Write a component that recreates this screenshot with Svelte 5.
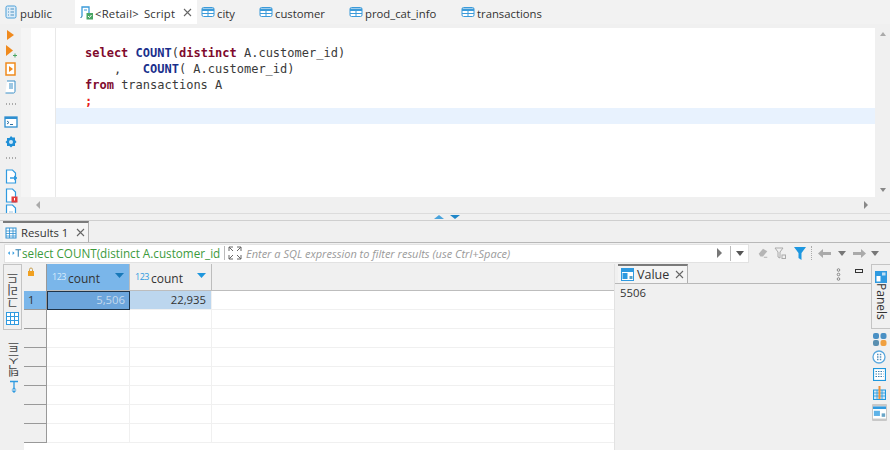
<script>
  const tabs = [
    { name: "city", width: 58 },
    { name: "customer", width: 90 },
    { name: "prod_cat_info", width: 112 },
    { name: "transactions", width: 100 },
  ];
  const rows = [1, 2, 3, 4, 5, 6, 7, 8];
</script>

{#snippet tableIcon()}
  <svg class="ic" width="14" height="12" viewBox="0 0 14 12">
    <rect x="1" y="1.5" width="12" height="9" rx="1.5" fill="#fff" stroke="#3b9ad9" />
    <path d="M1 2.500h12v2.500H1z" fill="#3b9ad9" />
    <path d="M7 5v5M1 7.500h12" stroke="#3b9ad9" />
  </svg>
{/snippet}

{#snippet doc(badge)}
  <svg width="14" height="15" viewBox="0 0 14 15">
    <path d="M2.500 1h6l3 3v10h-9z" fill="#fff" stroke="#2f9ae0" stroke-width="1.200" />
    {#if badge === "arrow"}
      <path d="M6 9h7" stroke="#2f9ae0" stroke-width="1.500" />
      <path d="M10 6.500l3 2.500-3 2.500z" fill="#2f9ae0" />
    {:else if badge === "red"}
      <rect x="7.500" y="8.500" width="6" height="6" fill="#e23b3b" />
      <path d="M10.500 10v2.500" stroke="#fff" />
    {:else}
      <path d="M5 8h4M5 10h4" stroke="#9cc7e6" />
    {/if}
  </svg>
{/snippet}

<div class="page">
  <div class="editor-tabs">
    <div class="tab plain first">
      <svg class="ic" width="12" height="14" viewBox="0 0 12 14">
        <rect x="1" y="1" width="10" height="12" rx="1.500" fill="#dcecf8" stroke="#4a9fd8" />
        <path d="M3 4h1M3 7h1M3 10h1M5.500 4h3.500M5.500 7h3.500M5.500 10h3.500" stroke="#4a8fc0" />
      </svg>
      public
    </div>
    <div class="tab active">
      <svg class="ic" width="15" height="15" viewBox="0 0 15 15">
        <path d="M3 11V2h7v7" fill="none" stroke="#3a9ad9" stroke-width="1.300" />
        <path d="M1.500 12.500c1 0 1.500-.5 1.500-1.500M5 5h3" stroke="#3a9ad9" />
        <rect x="7.500" y="8" width="6.500" height="6.500" fill="#4aa564" />
        <path d="M9 11l1.500 1.500L12.500 10" stroke="#fff" fill="none" />
      </svg>
      <span class="wide">&lt;Retail&gt; Script</span>
      <svg class="close" width="9" height="9" viewBox="0 0 9 9"><path d="M1 1l7 7M8 1l-7 7" stroke="#666" stroke-width="1.100" /></svg>
    </div>
    {#each tabs as tab}
      <div class="tab plain" style="width:{tab.width}px">
        {@render tableIcon()}
        {tab.name}
      </div>
    {/each}
  </div>

  <div class="editor">
    <div class="tools">
      <svg width="10" height="12" viewBox="0 0 10 12"><path d="M1 1l7 5-7 5z" fill="#f08a1d" /></svg>
      <svg width="14" height="13" viewBox="0 0 14 13"><path d="M2 0l7 5.500-7 5.500z" fill="#f08a1d" /><path d="M9 10.500h4M11 8.500v4" stroke="#4aa564" /></svg>
      <svg width="13" height="14" viewBox="0 0 13 14"><path d="M2 1h9v12H2z" fill="#fff" stroke="#f08a1d" stroke-width="1.500" /><path d="M5 4l4 3-4 3z" fill="#f08a1d" /></svg>
      <svg width="13" height="14" viewBox="0 0 13 14"><path d="M3 1h8v10c0 1-.5 2-1.500 2H1.500" fill="#fff" stroke="#3a8fc7" /><path d="M5 4h4M5 6h4M5 8h4" stroke="#3a8fc7" /></svg>
      <span class="dots first-dots"></span>
      <svg width="14" height="12" viewBox="0 0 14 12"><rect x="1" y="1" width="12" height="10" fill="#fff" stroke="#2f8fd0" stroke-width="1.300" /><path d="M1 2h12" stroke="#2f8fd0" stroke-width="2" /><path d="M3 5l2 1.500L3 8M6 8.500h3" stroke="#2f6f9f" fill="none" /></svg>
      <svg class="gear" width="14" height="14" viewBox="0 0 14 14"><path d="M7 1l1.500 1.500h2.500v2.500L12.500 7 11 8.500V11H8.500L7 12.500 5.500 11H3V8.500L1.500 7 3 5.500V3h2.500z" fill="#1f8fd6" /><circle cx="7" cy="7" r="2" fill="#cfe8f8" /></svg>
      <span class="dots second-dots"></span>
      {@render doc("arrow")}
      {@render doc("red")}
      <span class="last-doc">{@render doc("plain")}</span>
    </div>
    <div class="ruler"></div>
    <div class="code-area">
      <div class="code">
        <div class="gutter"></div>
        <div class="lines">
          <div class="line"><b class="kw">select</b> <b class="fn">COUNT</b>(<b class="kw">distinct</b> A.customer_id)</div>
          <div class="line">{"    ,   "}<b class="fn">COUNT</b>( A.customer_id)</div>
          <div class="line"><b class="kw">from</b> transactions A</div>
          <div class="line"><b class="semi">;</b></div>
          <div class="line current"></div>
        </div>
        <div class="vscroll">
          <svg width="8" height="6" viewBox="0 0 8 6"><path d="M1 5l3-4 3 4z" fill="#aaa" /></svg>
          <svg width="8" height="6" viewBox="0 0 8 6"><path d="M1 1l3 4 3-4z" fill="#888" /></svg>
        </div>
      </div>
      <div class="hscroll">
        <svg width="6" height="8" viewBox="0 0 6 8"><path d="M5 0L1 4l4 4z" fill="#aaa" /></svg>
        <svg width="6" height="8" viewBox="0 0 6 8"><path d="M1 0l4 4-4 4z" fill="#888" /></svg>
      </div>
    </div>
  </div>

  <div class="sash">
    <svg width="30" height="6" viewBox="0 0 30 6"><path d="M1 5l5-4 5 4z" fill="#4aa3dc" /><path d="M17 1l5 4 5-4z" fill="#1f86c8" /></svg>
  </div>

  <div class="results-tabs">
    <div class="rtab">
      <svg class="ic" width="12" height="12" viewBox="0 0 12 12"><rect x="1" y="1" width="10" height="10" fill="#fff" stroke="#2f8fd0" /><path d="M1 4h10M1 6.500h10M1 9h10M4.500 1v10M8 1v10" stroke="#2f8fd0" stroke-width=".8" /></svg>
      <span>Results 1</span>
      <svg class="close" width="9" height="9" viewBox="0 0 9 9"><path d="M1 1l7 7M8 1l-7 7" stroke="#666" stroke-width="1.100" /></svg>
    </div>
  </div>

  <div class="filter-bar">
    <div class="filter-input">
      <svg class="t-ic" width="15" height="10" viewBox="0 0 16 10"><path d="M1 5l2-2v4zM8 5L6 3v4z" fill="#2f9ae0" /><path d="M9 1.500h6M12 1.500V9" stroke="#2f7fb0" stroke-width="1.100" /></svg>
      <span class="query">select COUNT(distinct A.customer_id</span>
      <svg class="expand" width="14" height="14" viewBox="0 0 14 14"><path d="M1 5V1h4M9 1h4v4M13 9v4H9M5 13H1V9M1 1l4 4M13 1L9 5M13 13L9 9M1 13l4-4" stroke="#666" fill="none" /></svg>
      <span class="placeholder">Enter a SQL expression to filter results (use Ctrl+Space)</span>
      <svg class="go" width="6" height="10" viewBox="0 0 6 10"><path d="M1 0l5 5-5 5z" fill="#777" /></svg>
      <span class="combo"><svg width="8" height="5" viewBox="0 0 8 5"><path d="M0 0h8L4 5z" fill="#555" /></svg></span>
    </div>
    <div class="filter-tools">
      <svg width="12" height="14" viewBox="0 0 14 14"><path d="M2 8l5-6 5 3-5 6H4z" fill="#b5b5b5" /><path d="M8 12h4" stroke="#aaa" /></svg>
      <svg width="13" height="13" viewBox="0 0 13 13"><path d="M1 1h8L6 5v6L4 10V5z" fill="none" stroke="#aaa" /><rect x="8" y="8" width="3.500" height="3.500" fill="none" stroke="#aaa" /></svg>
      <svg class="nudge" width="12" height="13" viewBox="0 0 12 13"><path d="M0 0h12L7.500 6v7l-3-2V6z" fill="#1d97e0" /></svg>
      <span class="vdots"></span>
      <svg width="13" height="9" viewBox="0 0 13 9"><path d="M5 0L0 4.500 5 9V6h8V3H5z" fill="#aaa" /></svg>
      <svg class="nudge" width="8" height="5" viewBox="0 0 8 5"><path d="M0 0h8L4 5z" fill="#777" /></svg>
      <svg class="nudge" width="13" height="9" viewBox="0 0 13 9"><path d="M8 0l5 4.500L8 9V6H0V3h8z" fill="#aaa" /></svg>
      <svg width="8" height="5" viewBox="0 0 8 5"><path d="M0 0h8L4 5z" fill="#777" /></svg>
    </div>
  </div>

  <div class="results">
    <div class="modes">
      <div class="mode selected">
        <span class="vert">그리드</span>
        <svg width="13" height="13" viewBox="0 0 13 13"><rect x=".5" y=".5" width="12" height="12" fill="#fff" stroke="#2f9ae0" /><path d="M.5 4.500h12M.5 8.500h12M4.500 .5v12M8.500 .5v12" stroke="#2f9ae0" /></svg>
      </div>
      <div class="mode">
        <span class="vert">텍스트</span>
        <svg width="10" height="14" viewBox="0 0 10 14"><path d="M1 1.500h8M5 1.500V8" stroke="#2f9ae0" stroke-width="1.300" /><path d="M2.500 9.500h5L5 7.500zM2.500 10.500h5L5 13z" fill="#2f9ae0" /></svg>
      </div>
    </div>

    <div class="grid">
      <div class="corner">
        <svg width="8" height="10" viewBox="0 0 8 10"><rect x="1" y="4" width="6" height="5" fill="#f0a020" /><path d="M2.500 4V2.500a1.500 1.500 0 0 1 3 0V4" fill="none" stroke="#c8a050" /></svg>
      </div>
      <div class="head on">
        <span class="num">123</span><span>count</span>
        <svg class="sort" width="9" height="5" viewBox="0 0 9 5"><path d="M0 0h9L4.500 5z" fill="#1878b8" /></svg>
      </div>
      <div class="head">
        <span class="num">123</span><span>count</span>
        <svg class="sort" width="9" height="5" viewBox="0 0 9 5"><path d="M0 0h9L4.500 5z" fill="#1f97dd" /></svg>
      </div>
      <div class="head-rest"></div>

      {#each rows as r}
        <div class="rowhead" class:on={r === 1}>{r === 1 ? "1" : ""}</div>
        <div class="cell" class:focus={r === 1}>{r === 1 ? "5,506" : ""}</div>
        <div class="cell" class:second={r === 1}>{r === 1 ? "22,935" : ""}</div>
        <div class="cell rest"></div>
      {/each}
    </div>

    <div class="value-panel">
      <div class="value-head">
        <div class="vtab">
          <svg class="ic" width="13" height="13" viewBox="0 0 13 13"><rect x=".5" y=".5" width="12" height="12" fill="#fff" stroke="#2f9ae0" /><path d="M.5 2.500h12" stroke="#2f9ae0" stroke-width="3" /><path d="M1.500 5h5v6h-5z" fill="#2f9ae0" /><path d="M8.500 8h3v3h-3z" fill="#5aa3c8" /></svg>
          <span>Value</span>
          <svg class="close" width="9" height="9" viewBox="0 0 9 9"><path d="M1 1l7 7M8 1l-7 7" stroke="#666" stroke-width="1.100" /></svg>
        </div>
        <svg class="more" width="5" height="13" viewBox="0 0 5 13"><g fill="none" stroke="#888"><circle cx="2.500" cy="2" r="1.300" /><circle cx="2.500" cy="6.500" r="1.300" /><circle cx="2.500" cy="11" r="1.300" /></g></svg>
        <span class="minimize"></span>
      </div>
      <div class="value-text">5506</div>
    </div>

    <div class="panels">
      <div class="panels-btn">
        <svg width="12" height="12" viewBox="0 0 12 12"><rect width="12" height="12" fill="#2f9ae0" /><rect x="1.500" y="5" width="4" height="5.500" fill="#fff" /><rect x="7" y="1.500" width="3.500" height="3" fill="#bfe0f5" /></svg>
        <span class="panels-label">Panels</span>
      </div>
      <div class="panel-icons">
        <svg width="15" height="13" viewBox="0 0 15 13"><rect x="1" y="0" width="6" height="6" rx="2" fill="#4a90c4" /><rect x="8.500" y="0" width="6" height="6" rx="2" fill="#4a90c4" /><rect x="1" y="7" width="6" height="6" rx="2" fill="#5a8fb0" /><rect x="8.500" y="7" width="6" height="6" rx="2" fill="#f0a040" /></svg>
        <svg width="14" height="14" viewBox="0 0 14 14"><circle cx="7" cy="7" r="6" fill="#fff" stroke="#5aa8de" stroke-width="1.300" /><path d="M5 4.500h1.500M7.800 4.500h1.500M5 7h1.500M7.800 7h1.500M5 9.500h1.500M7.800 9.500h1.500" stroke="#5590bb" stroke-width="1.300" /></svg>
        <svg width="13" height="13" viewBox="0 0 13 13"><rect x=".5" y=".5" width="12" height="12" fill="#fff" stroke="#1f97dd" stroke-width="1.200" /><path d="M2.500 3.500h8M2.500 6h8M2.500 8.500h8" stroke="#3a80b0" stroke-dasharray="1.500 1" /></svg>
        <svg width="13" height="15" viewBox="0 0 13 15"><rect x=".5" y="5" width="12" height="9.500" fill="#cfe6f6" stroke="#1f97dd" /><path d="M.5 8h12M.5 11h12M4 5v9.500M9 5v9.500" stroke="#1f97dd" stroke-width=".8" /><path d="M6.500 1v13" stroke="#f0923a" stroke-width="2" /></svg>
        <div class="panel-on">
          <svg width="13" height="13" viewBox="0 0 15 14"><rect width="15" height="14" fill="#fff" /><rect width="15" height="3" fill="#2f9ae0" /><rect x="1" y="5" width="7" height="6" fill="#5fb3e8" /><rect x="10" y="8" width="4" height="4" fill="#6aa6c8" /></svg>
        </div>
      </div>
    </div>
  </div>
</div>

<style>
  :global(body) {
    margin: 0;
    background: #f0f0f0;
  }
  .page {
    width: 890px;
    height: 450px;
    overflow: hidden;
    display: flex;
    flex-direction: column;
    font-family: "Open Sans", "Noto Sans", sans-serif;
    font-size: 11.3px;
    color: #333;
    background: #f0f0f0;
  }
  svg {
    display: block;
    flex: none;
  }

  .editor-tabs {
    height: 24px;
    display: flex;
    flex: none;
    background: #f2f2f2;
  }
  .tab {
    display: flex;
    align-items: center;
    white-space: nowrap;
    box-sizing: border-box;
    padding-top: 2px;
  }
  .tab .ic {
    margin-top: -2px;
  }
  .tab.first {
    width: 75px;
    padding-left: 5px;
    gap: 3px;
  }
  .tab.active {
    width: 122px;
    padding-left: 4px;
    background: #fff;
    gap: 1px;
  }
  .tab.plain:not(.first) {
    gap: 2px;
    padding-left: 4px;
  }
  .tab .close {
    margin-left: 7px;
    margin-top: -2px;
  }
  .wide {
    letter-spacing: 0.2px;
    word-spacing: 2px;
  }

  .editor {
    height: 189px;
    flex: none;
    display: flex;
    padding-top: 4px;
    box-sizing: border-box;
  }
  .tools {
    width: 21px;
    flex: none;
    display: flex;
    flex-direction: column;
    align-items: center;
    gap: 4px;
    padding-top: 1px;
    height: 185px;
    overflow: hidden;
    box-sizing: border-box;
  }
  .dots {
    width: 12px;
    height: 6px;
    flex: none;
    background: radial-gradient(circle, #aaa 1px, transparent 1px) 0 0 / 3px 6px;
  }
  .first-dots {
    margin: 3px 0 5px;
  }
  .gear {
    margin-top: 3px;
  }
  .second-dots {
    margin: 2px 0 4px;
  }
  .last-doc {
    margin-top: -3px;
  }
  .ruler {
    width: 10px;
    flex: none;
    background: #f5f5f5;
    height: 169px;
  }
  .code-area {
    flex: 1;
    display: flex;
    flex-direction: column;
    min-width: 0;
  }
  .code {
    flex: 1;
    display: flex;
    background: #fff;
    min-height: 0;
  }
  .gutter {
    width: 24px;
    flex: none;
    border-right: 1px solid #e8e8e8;
  }
  .lines {
    flex: 1;
    padding-top: 16px;
    font-family: "DejaVu Sans Mono", monospace;
    font-size: 12px;
    line-height: 16px;
    color: #3a3a3a;
  }
  .line {
    height: 16px;
    padding-left: 29px;
    padding-top: 1px;
    box-sizing: border-box;
    white-space: pre;
  }
  .line.current {
    background: #e8f2fe;
  }
  .kw {
    color: #7f0a2d;
  }
  .fn {
    color: #1a2f8c;
  }
  .semi {
    color: #e8201a;
  }
  .vscroll {
    width: 15px;
    flex: none;
    background: #f0f0f0;
    display: flex;
    flex-direction: column;
    justify-content: space-between;
    align-items: center;
    padding: 3px 0 4px;
    box-sizing: border-box;
  }
  .hscroll {
    height: 16px;
    flex: none;
    padding: 0 21px 0 4px;
    display: flex;
    align-items: center;
    justify-content: space-between;
  }

  .sash {
    height: 8px;
    flex: none;
    display: flex;
    justify-content: center;
    padding-left: 6px;
    box-sizing: border-box;
    border-top: 1px solid #dcdcdc;
    border-bottom: 1px solid #cfcfcf;
    align-items: center;
  }

  .results-tabs {
    height: 22px;
    flex: none;
    box-sizing: border-box;
    border-bottom: 1px solid #b8b8b8;
    padding-left: 3px;
  }
  .rtab {
    width: 86px;
    height: 21px;
    box-sizing: border-box;
    border-top: 2px solid #7a7a7a;
    border-right: 1px solid #b0b0b0;
    background: #f4f4f4;
    display: flex;
    align-items: center;
    padding-left: 2px;
    gap: 4px;
    white-space: nowrap;
  }
  .rtab .close {
    margin-left: 4px;
  }

  .filter-bar {
    height: 20px;
    flex: none;
    display: flex;
    align-items: center;
    padding: 0 0 0 4px;
  }
  .filter-input {
    width: 745px;
    height: 19px;
    flex: none;
    background: #fff;
    border: 1px solid #e2e2e2;
    box-sizing: border-box;
    display: flex;
    align-items: center;
    white-space: nowrap;
    overflow: hidden;
  }
  .t-ic {
    margin-left: 2px;
  }
  .query {
    color: #3c9a3c;
    font-size: 11.7px;
    width: 200px;
    overflow: hidden;
    flex: none;
  }
  .expand {
    margin-left: 2px;
    border-left: 1px solid #bbb;
    padding-left: 3px;
  }
  .placeholder {
    color: #9a9a9a;
    font-style: italic;
    font-size: 11px;
    margin-left: 4px;
    flex: 1;
  }
  .go {
    margin-right: 8px;
  }
  .combo {
    border-left: 1px solid #bbb;
    height: 15px;
    width: 17px;
    display: flex;
    align-items: center;
    justify-content: center;
    flex: none;
  }
  .filter-tools {
    display: flex;
    align-items: center;
    gap: 5px;
    margin-left: 8px;
  }
  .nudge {
    margin-left: 2px;
  }
  .vdots {
    width: 1px;
    height: 14px;
    border-left: 1px dotted #aaa;
  }

  .results {
    flex: 1;
    display: flex;
    min-height: 0;
    padding-top: 1px;
    padding-left: 3px;
  }
  .modes {
    width: 21px;
    flex: none;
    display: flex;
    flex-direction: column;
    gap: 8px;
  }
  .mode {
    display: flex;
    flex-direction: column;
    align-items: center;
    gap: 3px;
    padding: 3px 0;
    box-sizing: border-box;
  }
  .mode.selected {
    border: 1px solid #c4c4c4;
    height: 66px;
    width: 19px;
    padding-top: 7px;
    gap: 4px;
  }
  .vert {
    writing-mode: vertical-rl;
    transform: rotate(180deg);
    font-family: "Noto Sans CJK KR", sans-serif;
    font-size: 12px;
    line-height: 14px;
    color: #444;
  }

  .grid {
    width: 590px;
    flex: none;
    display: grid;
    grid-template-columns: 23px 83px 82px 1fr;
    grid-auto-rows: 19px;
    grid-template-rows: 27px;
    background: #fff;
    overflow: hidden;
  }
  .corner {
    background: #f0f0f0;
    padding: 3px 0 0 3px;
    border-right: 1px solid #999;
    box-sizing: border-box;
  }
  .head {
    background: #f0f0f0;
    border-right: 1px solid #bdbdbd;
    border-bottom: 1px solid #bdbdbd;
    box-sizing: border-box;
    display: flex;
    align-items: center;
    padding: 3px 0 0 5px;
    font-size: 12px;
    position: relative;
    color: #333;
    gap: 2px;
  }
  .head.on {
    background: #7ab6ea;
  }
  .num {
    font-size: 9px;
    letter-spacing: -0.5px;
    color: #2f9ae0;
    margin-top: -4px;
  }
  .head.on .num {
    color: #d6ebfb;
  }
  .sort {
    position: absolute;
    right: 5px;
    top: 9px;
  }
  .head-rest {
    background: #f0f0f0;
    border-bottom: 1px solid #bdbdbd;
  }
  .rowhead {
    background: #f0f0f0;
    border-bottom: 1px solid #999;
    border-right: 1px solid #999;
    box-sizing: border-box;
    padding-left: 4px;
    line-height: 18px;
  }
  .rowhead.on {
    background: #7ab6ea;
  }
  .cell {
    border-bottom: 1px solid #f0f0f0;
    border-right: 1px solid #f0f0f0;
    box-sizing: border-box;
    text-align: right;
    padding-right: 5px;
    line-height: 18px;
  }
  .cell.rest {
    border-right: 0;
  }
  .cell.focus {
    background: #6ca5dc;
    color: #c5daee;
    border: 1px solid #1f3348;
    line-height: 16px;
    padding-right: 4px;
  }
  .cell.second {
    background: #bcd6ee;
  }

  .value-panel {
    flex: 1;
    min-width: 0;
    border-left: 1px solid #e2e2e2;
  }
  .value-head {
    height: 19px;
    display: flex;
    align-items: flex-start;
    border-bottom: 1px solid #b8b8b8;
  }
  .vtab {
    width: 70px;
    height: 19px;
    box-sizing: border-box;
    border-top: 2px solid #7a7a7a;
    border-right: 1px solid #b0b0b0;
    background: #f4f4f4;
    display: flex;
    align-items: center;
    padding-left: 3px;
    gap: 3px;
    margin-left: 3px;
    font-size: 12.500px;
  }
  .vtab .close {
    margin-left: 3px;
  }
  .more {
    margin: 4px 0 0 148px;
  }
  .minimize {
    width: 6px;
    height: 2px;
    border: 1px solid #333;
    margin: 5px 0 0 14px;
  }
  .value-text {
    padding: 1px 0 0 5px;
    line-height: 16px;
  }

  .panels {
    width: 19px;
    flex: none;
    display: flex;
    flex-direction: column;
    align-items: center;
  }
  .panels-btn {
    width: 19px;
    height: 65px;
    border: 1px solid #c4c4c4;
    border-right: 0;
    box-sizing: border-box;
    display: flex;
    flex-direction: column;
    align-items: center;
    padding-top: 6px;
    gap: 0;
  }
  .panels-label {
    writing-mode: vertical-rl;
    font-size: 12px;
    line-height: 14px;
  }
  .panel-icons {
    display: flex;
    flex-direction: column;
    align-items: center;
    gap: 4px;
    padding-top: 4px;
    margin-right: 3px;
  }
  .panel-on {
    background: #c8c8c8;
    border-radius: 1px;
    padding: 2px 1px;
  }
</style>
